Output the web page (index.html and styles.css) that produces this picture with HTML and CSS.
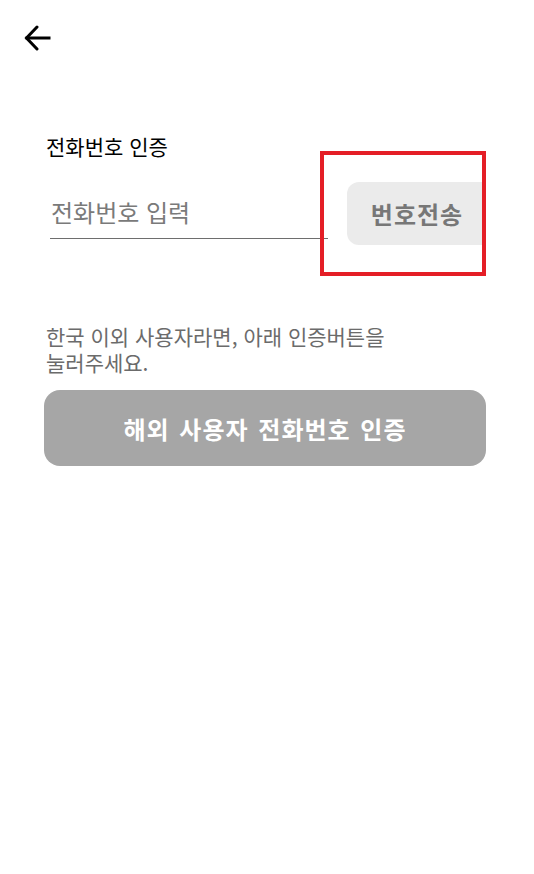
FILE: index.html
```html
<!DOCTYPE html>
<html lang="ko">
<head>
<meta charset="utf-8">
<title>전화번호 인증</title>
<link rel="stylesheet" href="styles.css">
</head>
<body>
<div class="page">
  <header class="header">
    <button class="back" aria-label="뒤로">
      <svg width="28" height="26" viewBox="0 0 28 26" fill="none" stroke="#000" stroke-width="3" stroke-linecap="square">
        <path d="M3 13 H25"/>
        <path d="M13 2 L2.5 13 L13 24" stroke-linecap="round" stroke-linejoin="miter"/>
      </svg>
    </button>
  </header>
  <main class="content">
    <h2 class="title">전화번호 인증</h2>
    <div class="row">
      <input class="phone" type="text" placeholder="전화번호 입력">
      <div class="highlight">
        <button class="send">번호전송</button>
      </div>
    </div>
    <p class="desc">한국 이외 사용자라면, 아래 인증버튼을<br>눌러주세요.</p>
    <button class="overseas">해외 사용자 전화번호 인증</button>
  </main>
</div>
</body>
</html>
```
FILE: styles.css
```css
* { box-sizing: border-box; }
html, body {
  margin: 0;
  padding: 0;
  background: #fff;
}
body {
  font-family: "Noto Sans CJK KR", "Noto Sans", sans-serif;
  width: 534px;
  height: 874px;
}
.header {
  padding: 25px 0 0 24px;
  height: 60px;
}
.back {
  border: none;
  background: none;
  padding: 0;
  display: block;
  width: 28px;
  height: 26px;
}
.back svg { display: block; }
.content {
  padding: 0 48px 0 44px;
}
.title {
  margin: 72px 0 0 2px;
  font-size: 21px;
  font-weight: 400;
  line-height: 29px;
  color: #000;
}
.row {
  display: flex;
  align-items: flex-start;
  margin-top: -10px;
  margin-left: 6px;
}
.phone {
  width: 278px;
  height: 49px;
  margin-top: 39px;
  border: none;
  border-bottom: 1.5px solid #6e6e6e;
  padding: 0 0 6px 1px;
  font-family: inherit;
  font-size: 24px;
  color: #222;
  background: transparent;
  outline: none;
}
.phone::placeholder { color: #7a7a7a; }
.highlight {
  margin-left: -8px;
  width: 166px;
  height: 125px;
  border: 4px solid #e41e26;
  padding: 27px 0 0 23px;
}
.send {
  display: block;
  width: 135px;
  height: 63px;
  border: none;
  border-radius: 12px 0 0 12px;
  background: #ebebeb;
  color: #777;
  font-family: inherit;
  font-size: 24px;
  font-weight: 700;
  letter-spacing: 1px;
  padding: 0 0 0 5px;
}
.desc {
  margin: 47px 0 0 2px;
  font-size: 21px;
  line-height: 26px;
  color: #6b6b6b;
}
.overseas {
  display: block;
  width: 442px;
  height: 76px;
  margin-top: 15px;
  border: none;
  border-radius: 16px;
  background: #a6a6a6;
  color: #fff;
  font-family: inherit;
  font-size: 24px;
  font-weight: 700;
  letter-spacing: 1px;
  word-spacing: 2px;
  padding: 0;
}
```
